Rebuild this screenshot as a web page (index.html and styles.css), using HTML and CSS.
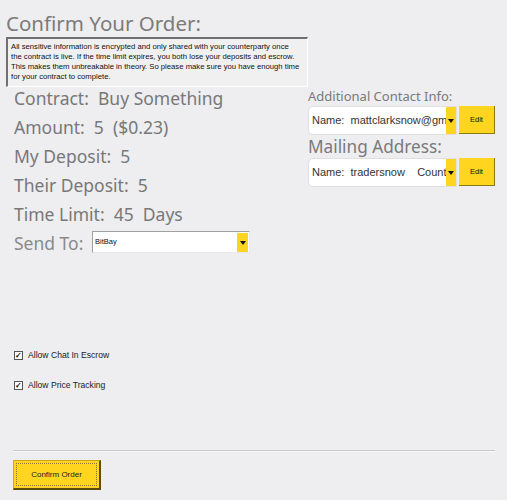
FILE: index.html
```html
<!DOCTYPE html>
<html>
<head>
<meta charset="utf-8">
<link rel="stylesheet" href="styles.css">
</head>
<body>
<div class="page">
  <h1 class="title">Confirm Your Order:</h1>
  <div class="info">All sensitive information is encrypted and only shared with your counterparty once<br>the contract is live. If the time limit expires, you both lose your deposits and escrow.<br>This makes them unbreakable in theory. So please make sure you have enough time<br>for your contract to complete.</div>
  <div class="columns">
    <div class="left">
      <div class="row">Contract:  Buy Something</div>
      <div class="row">Amount:  5  ($0.23)</div>
      <div class="row">My Deposit:  5</div>
      <div class="row">Their Deposit:  5</div>
      <div class="row">Time Limit:  45  Days</div>
      <div class="row send">
        <span class="send-label">Send To:</span>
        <div class="select">
          <span class="select-text">BitBay</span>
          <span class="select-arrow"><span class="tri"></span></span>
        </div>
      </div>
    </div>
    <div class="right">
      <div class="small-head">Additional Contact Info:</div>
      <div class="combo-row">
        <div class="combo">
          <span class="combo-text">Name:  mattclarksnow@gmail.com</span>
          <span class="combo-arrow"><span class="tri"></span></span>
        </div>
        <button class="edit">Edit</button>
      </div>
      <div class="big-head">Mailing Address:</div>
      <div class="combo-row">
        <div class="combo">
          <span class="combo-text">Name:  tradersnow    Country</span>
          <span class="combo-arrow"><span class="tri"></span></span>
        </div>
        <button class="edit">Edit</button>
      </div>
    </div>
  </div>
  <div class="checks">
    <label class="check"><span class="box">&#10003;</span>Allow Chat In Escrow</label>
    <label class="check"><span class="box">&#10003;</span>Allow Price Tracking</label>
  </div>
  <div class="rule"></div>
  <button class="confirm"><span class="focus">Confirm Order</span></button>
</div>
</body>
</html>
```
FILE: styles.css
```css
html, body {
  margin: 0;
  padding: 0;
  background: #eeedf0;
}
.page {
  width: 507px;
  height: 500px;
  position: relative;
  font-family: "Liberation Sans", Arial, sans-serif;
  color: #777;
  overflow: hidden;
}
.title {
  margin: 0;
  padding: 9px 0 0 6px;
  font-family: "Noto Sans", sans-serif;
  font-weight: normal;
  font-size: 20.5px;
  line-height: 28px;
  color: #7b7b7b;
  height: 28px;
}
.info {
  margin-left: 6px;
  width: 294px;
  height: 41px;
  padding: 3px 2px 3px 3px;
  border-top: 2px solid #707070;
  border-left: 2px solid #707070;
  border-right: 1px solid #fff;
  border-bottom: 1px solid #fff;
  background: #f0f0f0;
  font-size: 7.7px;
  line-height: 10px;
  color: #111;
  white-space: nowrap;
  overflow: hidden;
}
.columns {
  display: flex;
  padding-left: 14px;
  margin-top: -3px;
}
.left {
  width: 294px;
}
.row {
  font-family: "Noto Sans", sans-serif;
  font-size: 17.5px;
  line-height: 29px;
  height: 29px;
  white-space: pre;
  color: #787878;
}
.send {
  display: flex;
  align-items: center;
  color: #8a8a8a;
}
.send-label {
  width: 78px;
}
.select {
  display: flex;
  width: 156px;
  height: 20px;
  background: #fff;
  border-top: 1px solid #a0a0a0;
  border-left: 1px solid #a0a0a0;
  border-right: 1px solid #e8e8e8;
  border-bottom: 1px solid #e8e8e8;
  margin-top: -3px;
}
.select-text {
  flex: 1;
  font-family: "Liberation Sans", sans-serif;
  font-size: 7.5px;
  line-height: 20px;
  color: #111;
  padding-left: 2px;
}
.select-arrow {
  width: 11px;
  background: #ffd51f;
  display: flex;
  align-items: center;
  justify-content: center;
  margin: 1px 1px 0 0;
}
.tri {
  width: 0;
  height: 0;
  border-left: 3px solid transparent;
  border-right: 3px solid transparent;
  border-top: 4px solid #111;
}
.right {
  display: flex;
  flex-direction: column;
  padding-top: 2px;
}
.small-head {
  font-family: "Noto Sans", sans-serif;
  font-size: 13px;
  line-height: 20px;
  color: #7a7a7a;
}
.big-head {
  font-family: "Noto Sans", sans-serif;
  font-size: 17.2px;
  line-height: 22px;
  color: #7a7a7a;
  margin-top: 1px;
}
.combo-row {
  display: flex;
  align-items: flex-start;
}
.combo {
  display: flex;
  width: 147px;
  height: 27px;
  background: #fff;
  border: 1px solid #e0e0e0;
  border-radius: 5px 0 0 5px;
  overflow: hidden;
}
.combo-text {
  flex: 1;
  overflow: hidden;
  white-space: pre;
  font-family: "Liberation Sans", sans-serif;
  font-size: 11px;
  line-height: 26px;
  color: #333;
  padding-left: 3px;
}
.combo-arrow {
  width: 10px;
  background: #ffd51f;
  display: flex;
  align-items: center;
  justify-content: center;
}
.edit {
  margin-left: 2px;
  width: 36px;
  height: 28px;
  padding: 0;
  background: #ffd51f;
  border: none;
  border-right: 1px solid #8b7a14;
  border-bottom: 1px solid #8b7a14;
  font-family: "Liberation Sans", sans-serif;
  font-size: 7.5px;
  color: #111;
}
.checks {
  padding: 91px 0 0 14px;
  display: flex;
  flex-direction: column;
  gap: 18px;
}
.check {
  display: flex;
  align-items: center;
  font-size: 8.6px;
  color: #222;
  height: 12px;
}
.box {
  width: 7px;
  height: 7px;
  border: 1px solid #555;
  background: #fff;
  font-size: 8px;
  line-height: 7px;
  color: #111;
  text-align: center;
  margin-right: 5px;
  font-weight: bold;
}
.rule {
  margin: 59px 12px 0 13px;
  height: 1px;
  background: #c8c6cb;
  border-bottom: 1px solid #f8f8f8;
}
.confirm {
  display: block;
  margin: 8px 0 0 13px;
  width: 88px;
  height: 30px;
  padding: 2px;
  background: #ffd51f;
  border: none;
  border-right: 2px solid #5b4a10;
  border-bottom: 2px solid #5b4a10;
  border-top: 1px solid #ccaa10;
  border-left: 1px solid #ccaa10;
}
.focus {
  display: flex;
  align-items: center;
  justify-content: center;
  height: 100%;
  border: 1px dotted #8a7a30;
  box-sizing: border-box;
  font-family: "Liberation Sans", sans-serif;
  font-size: 8px;
  color: #222;
}
```
